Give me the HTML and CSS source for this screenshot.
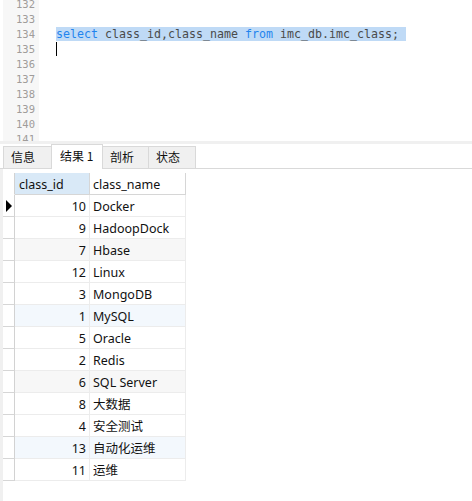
FILE: index.html
```html
<!DOCTYPE html>
<html>
<head>
<meta charset="utf-8">
<link rel="stylesheet" href="styles.css">
</head>
<body>
<div class="editor">
  <div class="gutter">
    <div class="lines">
      <div>132</div><div>133</div><div>134</div><div>135</div><div>136</div>
      <div>137</div><div>138</div><div>139</div><div>140</div><div>141</div>
    </div>
  </div>
  <div class="code">
    <div class="lines">
      <div class="ln"></div>
      <div class="ln"></div>
      <div class="ln"><span class="sel"><span class="kw">select</span> class_id,class_name <span class="kw">from</span> imc_db.imc_class; </span></div>
      <div class="ln"><span class="caret"></span></div>
      <div class="ln"></div>
      <div class="ln"></div>
      <div class="ln"></div>
      <div class="ln"></div>
      <div class="ln"></div>
      <div class="ln"></div>
    </div>
  </div>
</div>
<div class="sep"></div>
<div class="tabbar">
  <div class="tab t1">信息</div>
  <div class="tab active t2">结果 1</div>
  <div class="tab t3">剖析</div>
  <div class="tab t4">状态</div>
</div>
<div class="result">
  <div class="strip"></div>
  <div class="grid-wrap">
    <table class="grid">
      <colgroup><col class="c0"><col class="c1"><col class="c2"></colgroup>
      <thead>
        <tr><th class="ind"></th><th class="hid">class_id</th><th class="hname">class_name</th></tr>
      </thead>
      <tbody>
        <tr><td class="ind"><span class="arrow"></span></td><td class="num">10</td><td>Docker</td></tr>
        <tr><td class="ind"></td><td class="num">9</td><td>HadoopDock</td></tr>
        <tr class="gray"><td class="ind"></td><td class="num">7</td><td>Hbase</td></tr>
        <tr><td class="ind"></td><td class="num">12</td><td>Linux</td></tr>
        <tr><td class="ind"></td><td class="num">3</td><td>MongoDB</td></tr>
        <tr class="blue"><td class="ind"></td><td class="num">1</td><td>MySQL</td></tr>
        <tr><td class="ind"></td><td class="num">5</td><td>Oracle</td></tr>
        <tr><td class="ind"></td><td class="num">2</td><td>Redis</td></tr>
        <tr class="gray"><td class="ind"></td><td class="num">6</td><td>SQL Server</td></tr>
        <tr><td class="ind"></td><td class="num">8</td><td>大数据</td></tr>
        <tr><td class="ind"></td><td class="num">4</td><td>安全测试</td></tr>
        <tr class="blue"><td class="ind"></td><td class="num">13</td><td>自动化运维</td></tr>
        <tr><td class="ind"></td><td class="num">11</td><td>运维</td></tr>
      </tbody>
    </table>
  </div>
</div>
</body>
</html>
```
FILE: styles.css
```css
html, body {
  margin: 0;
  padding: 0;
  background: #ffffff;
}
body {
  width: 472px;
  height: 501px;
  overflow: hidden;
  font-family: "Noto Sans", "Noto Sans CJK SC", sans-serif;
}
.editor {
  height: 141px;
  display: flex;
  overflow: hidden;
  background: #ffffff;
}
.gutter {
  width: 36px;
  margin-left: 3px;
  background: #f7f7f7;
  text-align: right;
  font-family: "DejaVu Sans Mono", monospace;
  font-size: 10.5px;
  color: #a09c9a;
  box-sizing: border-box;
  padding-right: 4px;
}
.lines {
  margin-top: -3px;
}
.lines > div {
  height: 15px;
  line-height: 15px;
}
.code {
  flex: 1;
  padding-left: 17px;
  font-family: "DejaVu Sans Mono", monospace;
  font-size: 11.63px;
  color: #4a4a4a;
}
.ln {
  white-space: pre;
}
.sel {
  background: #bfdaf6;
  display: inline-block;
  height: 14px;
  line-height: 15px;
  vertical-align: top;
}
.kw {
  color: #1f84ee;
}
.caret {
  display: inline-block;
  width: 1px;
  height: 14px;
  background: #000000;
  vertical-align: top;
  margin-top: 0;
}
.sep {
  height: 3px;
  background: #f0f0f0;
}
.tabbar {
  height: 24px;
  display: flex;
  align-items: flex-end;
  padding-left: 3px;
  border-bottom: 1px solid #d9d9d9;
  font-family: "Noto Sans CJK SC", sans-serif;
  font-size: 12px;
  color: #111111;
}
.tab {
  box-sizing: border-box;
  height: 22px;
  line-height: 20px;
  padding-left: 7px;
  background: #f0f0f0;
  border: 1px solid #d9d9d9;
  border-bottom: none;
  margin-left: -1px;
}
.tab:first-child {
  margin-left: 0;
}
.tab.active {
  height: 25px;
  line-height: 22px;
  background: #ffffff;
  margin-bottom: -1px;
  position: relative;
  padding-left: 8px;
}
.t1 { width: 49px; }
.t2 { width: 52px; }
.t3 { width: 47px; }
.t4 { width: 48px; }
.result {
  display: flex;
  height: 332px;
}
.strip {
  width: 3px;
  background: #f0f0f0;
}
.grid-wrap {
  padding-top: 4px;
}
.grid {
  border-collapse: separate;
  border-spacing: 0;
  table-layout: fixed;
  width: 183px;
  font-size: 12.5px;
  color: #111111;
}
.c0 { width: 12px; }
.c1 { width: 75px; }
.c2 { width: 96px; }
.grid th, .grid td {
  box-sizing: border-box;
  height: 22px;
  padding: 2px 0 0 3px;
  border-right: 1px solid #ececec;
  border-bottom: 1px solid #ececec;
  font-weight: normal;
  text-align: left;
  white-space: nowrap;
  overflow: hidden;
  line-height: 19px;
}
.grid th {
  border-right-color: #d6d6d6;
  border-bottom-color: #d6d6d6;
}
.grid th.hid {
  background: #d9e9f7;
  padding-left: 4px;
}
.grid .ind {
  padding: 0;
  background: #ffffff;
  border-right-color: #d2d2d2;
  border-bottom-color: #d6d6d6;
  position: relative;
}
.grid th.ind {
  border-bottom-color: #ffffff;
}
.grid td.num {
  text-align: right;
  padding: 2px 3px 0 0;
}
.grid tr.gray td {
  background: #f7f7f7;
}
.grid tr.blue td {
  background: #f3f8fd;
}
.grid tr td.ind {
  background: #ffffff;
}
.arrow {
  position: absolute;
  left: 3px;
  top: 5px;
  width: 0;
  height: 0;
  border-top: 6px solid transparent;
  border-bottom: 6px solid transparent;
  border-left: 6px solid #000000;
}
```
